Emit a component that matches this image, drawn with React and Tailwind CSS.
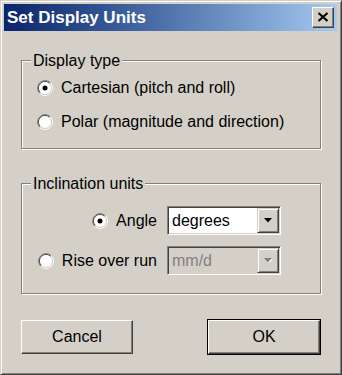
import React from 'react';

const Radio = ({ checked }) => (
  <svg width="16" height="16" viewBox="0 0 16 16" className="shrink-0">
    <path d="M2.697 13.303 A7.5 7.5 0 0 1 13.303 2.697" fill="none" stroke="#808080" strokeWidth="1" />
    <path d="M2.697 13.303 A7.5 7.5 0 0 0 13.303 2.697" fill="none" stroke="#ffffff" strokeWidth="1" />
    <path d="M3.404 12.596 A6.5 6.5 0 0 1 12.596 3.404" fill="none" stroke="#404040" strokeWidth="1" />
    <path d="M3.404 12.596 A6.5 6.5 0 0 0 12.596 3.404" fill="none" stroke="#d4d0c8" strokeWidth="1" />
    <circle cx="8" cy="8" r="6" fill="#ffffff" />
    {checked && <circle cx="8" cy="8" r="2.5" fill="#000000" />}
  </svg>
);

const RadioRow = ({ checked, label }) => (
  <div className="flex items-center gap-[8px]">
    <Radio checked={checked} />
    <span>{label}</span>
  </div>
);

const Select = ({ value, disabled }) => (
  <div className="w-[114px] h-[29px] flex border border-t-[#808080] border-l-[#808080] border-r-white border-b-white shadow-[inset_1px_1px_0_#404040,inset_-1px_-1px_0_#d4d0c8] p-[1px]">
    <div className={`flex-1 flex items-center pl-[3px] ${disabled ? 'bg-[#d4d0c8] text-[#808080]' : 'bg-white text-black'}`}>
      {value}
    </div>
    <div className="w-[22px] flex items-center justify-center bg-[#d4d0c8] border border-t-[#d4d0c8] border-l-[#d4d0c8] border-r-[#404040] border-b-[#404040] shadow-[inset_1px_1px_0_#fff,inset_-1px_-1px_0_#808080]">
      <svg width="9" height="6" viewBox="0 0 9 6">
        {disabled && <path d="M1 1 H9 L5 5 Z" fill="#ffffff" />}
        <path d="M0 0 H8 L4 4.5 Z" fill={disabled ? '#808080' : '#000000'} />
      </svg>
    </div>
  </div>
);

const Group = ({ title, className, children }) => (
  <div className={`relative w-[300px] border border-[#808080] shadow-[inset_1px_1px_0_#fff,1px_1px_0_#fff] ${className}`}>
    <span className="absolute -top-[10px] left-[9px] px-[2px] bg-[#d4d0c8] leading-[19px]">{title}</span>
    {children}
  </div>
);

const App = () => {
  return (
    <div className="w-[342px] h-[375px] bg-[#d4d0c8] border border-t-[#d4d0c8] border-l-[#d4d0c8] border-r-[#404040] border-b-[#404040] shadow-[inset_1px_1px_0_#fff,inset_-1px_-1px_0_#808080] pt-[3px] pl-[3px] pr-[4px] font-['Liberation_Sans',Arial,sans-serif] text-[16px] text-black">
      <div className="h-[27px] flex items-center justify-between bg-gradient-to-r from-[#0a246a] to-[#a6caf0] pl-[3px] pr-[3px]">
        <span className="text-white font-bold text-[17px]">Set Display Units</span>
        <div className="w-[22px] h-[21px] flex items-center justify-center bg-[#d4d0c8] border border-t-[#fff] border-l-[#fff] border-r-[#404040] border-b-[#404040] shadow-[inset_-1px_-1px_0_#808080]">
          <svg width="12" height="10" viewBox="0 0 12 10" className="-mt-[2px]">
            <path d="M1.5 1 L10.5 9 M10.5 1 L1.5 9" stroke="#000" strokeWidth="2.2" />
          </svg>
        </div>
      </div>

      <div className="pl-[17px] pt-[29px]">
        <Group title="Display type" className="h-[89px] pt-[10px] pl-[15px]">
          <div className="h-[34px] flex items-center">
            <RadioRow checked label="Cartesian (pitch and roll)" />
          </div>
          <div className="h-[34px] flex items-center">
            <RadioRow label="Polar (magnitude and direction)" />
          </div>
        </Group>

        <Group title="Inclination units" className="mt-[34px] h-[111px] pt-[22px] pl-[15px]">
          <div className="flex flex-col gap-[11px]">
            <div className="flex items-center gap-[10px]">
              <div className="w-[120px] flex justify-end">
                <RadioRow checked label="Angle" />
              </div>
              <Select value="degrees" />
            </div>
            <div className="flex items-center gap-[10px]">
              <div className="w-[120px] flex justify-end">
                <RadioRow label="Rise over run" />
              </div>
              <Select value="mm/d" disabled />
            </div>
          </div>
        </Group>

        <div className="w-[300px] mt-[25px] flex justify-between items-center">
          <button className="w-[112px] h-[34px] bg-[#d4d0c8] border border-t-white border-l-white border-r-[#404040] border-b-[#404040] shadow-[inset_-1px_-1px_0_#808080]">
            Cancel
          </button>
          <div className="border border-black">
            <button className="w-[112px] h-[34px] bg-[#d4d0c8] border border-t-white border-l-white border-r-[#404040] border-b-[#404040] shadow-[inset_-1px_-1px_0_#808080] block">
              OK
            </button>
          </div>
        </div>
      </div>
    </div>
  );
};

export default App;
